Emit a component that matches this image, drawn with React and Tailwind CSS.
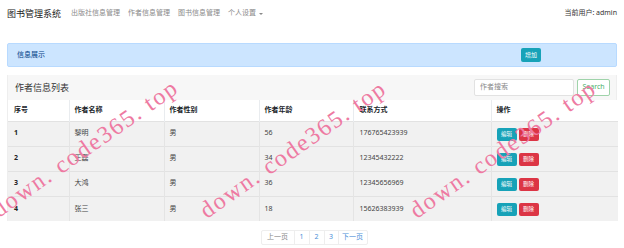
import React from "react";

const rows = [
  { id: 1, name: "黎明", sex: "男", age: 56, phone: "176765423939" },
  { id: 2, name: "王磊", sex: "男", age: 34, phone: "12345432222" },
  { id: 3, name: "大鸿", sex: "男", age: 36, phone: "12345656969" },
  { id: 4, name: "张三", sex: "男", age: 18, phone: "15626383939" },
];

function Watermark({ className }) {
  return (
    <div
      className={
        "pointer-events-none absolute -translate-x-1/2 -translate-y-1/2 -rotate-[35deg] whitespace-nowrap font-['Liberation_Serif',serif] text-[24px] leading-none tracking-[1.8px] text-[#ee7aa2] " +
        className
      }
    >
      down. code365. top
    </div>
  );
}

export default function App() {
  return (
    <div className="relative h-[248px] w-[624px] overflow-hidden bg-white font-['Noto_Sans','Noto_Sans_CJK_SC',sans-serif] text-[#212529]">
      {/* navbar */}
      <nav className="flex h-[27px] items-center px-[7px]">
        <span className="text-[9px] text-[#222]">图书管理系统</span>
        <div className="ml-[10px] flex items-center gap-[8px] text-[7px] text-[#8a8a8a]">
          <span>出版社信息管理</span>
          <span>作者信息管理</span>
          <span>图书信息管理</span>
          <span className="flex items-center gap-[3px]">
            个人设置
            <span className="inline-block h-0 w-0 border-x-[2px] border-t-[2.5px] border-x-transparent border-t-[#8a8a8a]" />
          </span>
        </div>
        <span className="ml-auto text-[7px] text-[#333]">当前用户: admin</span>
      </nav>

      {/* alert */}
      <div className="mx-[7px] mt-[16px] flex h-[24px] items-center rounded-[2px] border border-[#b8daff] bg-[#cce5ff] pl-[9px]">
        <span className="w-[504px] text-[7px] text-[#004085]">信息展示</span>
        <span className="flex h-[14px] w-[20px] items-center justify-center rounded-[2px] bg-[#17a2b8] text-[6px] text-white">
          增加
        </span>
      </div>

      {/* card */}
      <div className="mx-[7px] mt-[8px] border-x border-[#eeeeee]">
        <div className="flex h-[25px] items-center bg-[#f7f7f7] pl-[7px] pr-[6px]">
          <span className="text-[9px] text-[#333]">作者信息列表</span>
          <div className="ml-auto flex items-center gap-[3px]">
            <div className="flex h-[17px] w-[100px] items-center rounded-[2px] border border-[#e2e2e2] bg-white pl-[5px] text-[7px] text-[#888]">
              作者搜索
            </div>
            <div className="flex h-[17px] w-[33px] items-center justify-center rounded-[2px] border border-[#9fd3aa] bg-white text-[7px] text-[#4caf6a]">
              Search
            </div>
          </div>
        </div>
        <table className="w-[610px] table-fixed border-collapse text-[7px]">
          <colgroup>
            <col className="w-[61px]" />
            <col className="w-[95px]" />
            <col className="w-[95px]" />
            <col className="w-[94px]" />
            <col className="w-[138px]" />
            <col className="w-[127px]" />
          </colgroup>
          <thead>
            <tr className="h-[21px] bg-white text-left font-bold">
              <th className="pl-[6px] font-bold">序号</th>
              <th className="border-l border-[#e9ecef] pl-[5px] font-bold">作者名称</th>
              <th className="border-l border-[#e9ecef] pl-[5px] font-bold">作者性别</th>
              <th className="border-l border-[#e9ecef] pl-[5px] font-bold">作者年龄</th>
              <th className="border-l border-[#e9ecef] pl-[6px] font-bold">联系方式</th>
              <th className="border-l border-[#e9ecef] pl-[5px] font-bold">操作</th>
            </tr>
          </thead>
          <tbody>
            {rows.map((r) => (
              <tr key={r.id} className="h-[25px] border-t border-[#e2e2e2] bg-[#f1f1f1] text-[#444]">
                <td className="pl-[6px] font-bold text-[#222]">{r.id}</td>
                <td className="border-l border-[#e4e4e4] pl-[5px]">{r.name}</td>
                <td className="border-l border-[#e4e4e4] pl-[5px]">{r.sex}</td>
                <td className="border-l border-[#e4e4e4] pl-[5px]">{r.age}</td>
                <td className="border-l border-[#e4e4e4] pl-[6px]">{r.phone}</td>
                <td className="border-l border-[#e4e4e4] pl-[5px]">
                  <div className="flex items-center gap-[2px] pt-[1px]">
                    <span className="flex h-[13px] w-[20px] items-center justify-center rounded-[2px] bg-[#17a2b8] text-[5.5px] text-white">
                      编辑
                    </span>
                    <span className="flex h-[13px] w-[20px] items-center justify-center rounded-[2px] bg-[#dc3545] text-[5.5px] text-white">
                      删除
                    </span>
                  </div>
                </td>
              </tr>
            ))}
          </tbody>
        </table>
      </div>

      {/* pagination */}
      <div className="mt-[9px] flex justify-center pl-[4px]">
        <div className="flex h-[15px] items-stretch rounded-[2px] border border-[#eeeeee] text-[7px]">
          <span className="flex w-[32px] items-center justify-center text-[#888]">上一页</span>
          <span className="flex w-[15px] items-center justify-center border-l border-[#eeeeee] text-[#4a8fd8]">1</span>
          <span className="flex w-[15px] items-center justify-center border-l border-[#eeeeee] text-[#4a8fd8]">2</span>
          <span className="flex w-[14px] items-center justify-center border-l border-[#eeeeee] text-[#4a8fd8]">3</span>
          <span className="flex w-[29px] items-center justify-center border-l border-[#eeeeee] text-[#4a8fd8]">下一页</span>
        </div>
      </div>

      {/* watermarks */}
      <Watermark className="left-[85px] top-[148px]" />
      <Watermark className="left-[293px] top-[149px]" />
      <Watermark className="left-[503px] top-[149px]" />
    </div>
  );
}
